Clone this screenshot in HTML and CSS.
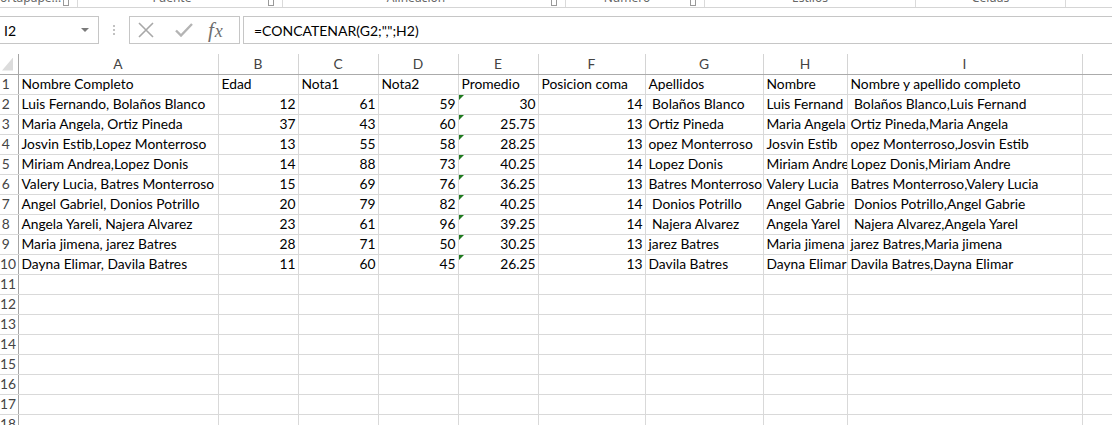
FILE: index.html
```html
<!DOCTYPE html>
<html lang="es">
<head>
    <meta charset="UTF-8">
    <title>Libro1 - Excel</title>
    <link rel="stylesheet" href="styles.css">
</head>
<body>

    <!-- bottom edge of the ribbon, group captions cut off -->
    <div class="ribbon">
        <div class="group g-clip"><span class="group-label">ortapape...</span><span class="launcher"></span></div>
        <div class="group g-font"><span class="group-label">Fuente</span><span class="launcher"></span></div>
        <div class="group g-align"><span class="group-label">Alineación</span><span class="launcher"></span></div>
        <div class="group g-num"><span class="group-label">Número</span><span class="launcher"></span></div>
        <div class="group g-styles"><span class="group-label">Estilos</span></div>
        <div class="group g-cells"><span class="group-label">Celdas</span></div>
    </div>

    <!-- formula bar -->
    <div class="formula-bar">
        <div class="name-box">
            <span>I2</span>
            <span class="drop"></span>
        </div>
        <div class="fb-grip"><span></span><span></span><span></span></div>
        <div class="fb-buttons">
            <svg class="ic-cancel" width="16" height="16" viewBox="0 0 16 16">
                <path d="M1 1 L15 15 M15 1 L1 15" stroke="#a8a8a8" stroke-width="1.6" fill="none"/>
            </svg>
            <svg class="ic-enter" width="18" height="14" viewBox="0 0 18 14">
                <path d="M1 7.5 L6 12.5 L17 1" stroke="#b4b4b4" stroke-width="2.4" fill="none"/>
            </svg>
            <span class="ic-fx"><i>f</i><i class="x">x</i></span>
        </div>
        <div class="fb-input">=CONCATENAR(G2;",";H2)</div>
    </div>

    <!-- worksheet -->
    <div class="sheet">
        <table class="grid">
            <colgroup>
                <col class="c-rh">
                <col class="c-a">
                <col class="c-b"><col class="c-b"><col class="c-b"><col class="c-b">
                <col class="c-f">
                <col class="c-g">
                <col class="c-h">
                <col class="c-i">
                <col class="c-j">
            </colgroup>
            <thead>
                <tr>
                    <th class="corner"><span class="corner-tri"></span></th>
                    <th>A</th><th>B</th><th>C</th><th>D</th><th>E</th>
                    <th>F</th><th>G</th><th>H</th><th>I</th><th></th>
                </tr>
            </thead>
            <tbody>
                <tr><td class="rn">1</td><td>Nombre Completo</td><td>Edad</td><td>Nota1</td><td>Nota2</td><td>Promedio</td><td>Posicion coma</td><td>Apellidos</td><td>Nombre</td><td>Nombre y apellido completo</td><td></td></tr>
                <tr><td class="rn">2</td><td>Luis Fernando, Bolaños Blanco</td><td class="num">12</td><td class="num">61</td><td class="num">59</td><td class="num flag">30</td><td class="num">14</td><td> Bolaños Blanco</td><td>Luis Fernand</td><td> Bolaños Blanco,Luis Fernand</td><td></td></tr>
                <tr><td class="rn">3</td><td>Maria Angela, Ortiz Pineda</td><td class="num">37</td><td class="num">43</td><td class="num">60</td><td class="num flag">25.75</td><td class="num">13</td><td>Ortiz Pineda</td><td>Maria Angela</td><td>Ortiz Pineda,Maria Angela</td><td></td></tr>
                <tr><td class="rn">4</td><td>Josvin Estib,Lopez Monterroso</td><td class="num">13</td><td class="num">55</td><td class="num">58</td><td class="num flag">28.25</td><td class="num">13</td><td>opez Monterroso</td><td>Josvin Estib</td><td>opez Monterroso,Josvin Estib</td><td></td></tr>
                <tr><td class="rn">5</td><td>Miriam Andrea,Lopez Donis</td><td class="num">14</td><td class="num">88</td><td class="num">73</td><td class="num flag">40.25</td><td class="num">14</td><td>Lopez Donis</td><td>Miriam Andre</td><td>Lopez Donis,Miriam Andre</td><td></td></tr>
                <tr><td class="rn">6</td><td>Valery Lucia, Batres Monterroso</td><td class="num">15</td><td class="num">69</td><td class="num">76</td><td class="num flag">36.25</td><td class="num">13</td><td>Batres Monterroso</td><td>Valery Lucia</td><td>Batres Monterroso,Valery Lucia</td><td></td></tr>
                <tr><td class="rn">7</td><td>Angel Gabriel, Donios Potrillo</td><td class="num">20</td><td class="num">79</td><td class="num">82</td><td class="num flag">40.25</td><td class="num">14</td><td> Donios Potrillo</td><td>Angel Gabrie</td><td> Donios Potrillo,Angel Gabrie</td><td></td></tr>
                <tr><td class="rn">8</td><td>Angela Yareli, Najera Alvarez</td><td class="num">23</td><td class="num">61</td><td class="num">96</td><td class="num flag">39.25</td><td class="num">14</td><td> Najera Alvarez</td><td>Angela Yarel</td><td> Najera Alvarez,Angela Yarel</td><td></td></tr>
                <tr><td class="rn">9</td><td>Maria jimena, jarez Batres</td><td class="num">28</td><td class="num">71</td><td class="num">50</td><td class="num flag">30.25</td><td class="num">13</td><td>jarez Batres</td><td>Maria jimena</td><td>jarez Batres,Maria jimena</td><td></td></tr>
                <tr><td class="rn">10</td><td>Dayna Elimar, Davila Batres</td><td class="num">11</td><td class="num">60</td><td class="num">45</td><td class="num flag">26.25</td><td class="num">13</td><td>Davila Batres</td><td>Dayna Elimar</td><td>Davila Batres,Dayna Elimar</td><td></td></tr>
                <tr><td class="rn">11</td><td></td><td></td><td></td><td></td><td></td><td></td><td></td><td></td><td></td><td></td></tr>
                <tr><td class="rn">12</td><td></td><td></td><td></td><td></td><td></td><td></td><td></td><td></td><td></td><td></td></tr>
                <tr><td class="rn">13</td><td></td><td></td><td></td><td></td><td></td><td></td><td></td><td></td><td></td><td></td></tr>
                <tr><td class="rn">14</td><td></td><td></td><td></td><td></td><td></td><td></td><td></td><td></td><td></td><td></td></tr>
                <tr><td class="rn">15</td><td></td><td></td><td></td><td></td><td></td><td></td><td></td><td></td><td></td><td></td></tr>
                <tr><td class="rn">16</td><td></td><td></td><td></td><td></td><td></td><td></td><td></td><td></td><td></td><td></td></tr>
                <tr><td class="rn">17</td><td></td><td></td><td></td><td></td><td></td><td></td><td></td><td></td><td></td><td></td></tr>
                <tr><td class="rn">18</td><td></td><td></td><td></td><td></td><td></td><td></td><td></td><td></td><td></td><td></td></tr>
            </tbody>
        </table>
    </div>

</body>
</html>
```

FILE: styles.css
```css
* {
    box-sizing: border-box;
}

body {
    margin: 0;
    font-family: Lato, "Liberation Sans", sans-serif;
    background: #fff;
    color: #000;
    overflow: hidden;
}

/* ribbon strip */
.ribbon {
    display: flex;
    height: 8px;
    border-bottom: 1px solid #d5d5d5;
    overflow: hidden;
    font-family: "Noto Sans", sans-serif;
    font-size: 12px;
    color: #666;
}

.group {
    display: flex;
    align-items: flex-start;
    height: 18px;
    margin-top: -10px;
    border-right: 1px solid #dadada;
}

.group-label {
    flex: 1;
    text-align: center;
    line-height: 16px;
    white-space: nowrap;
}

.launcher {
    width: 6px;
    height: 6px;
    margin: 10px 8px 0 2px;
    border-left: 1px solid #999;
    border-bottom: 1px solid #999;
    border-right: 1px solid #999;
}

.g-clip { width: 78px; }
.g-font { width: 205px; }
.g-align { width: 283px; }
.g-num { width: 139px; }
.g-styles { width: 211px; }
.g-cells { width: 150px; }

/* formula bar */
.formula-bar {
    display: flex;
    height: 28px;
    margin: 8px 0 10px;
    font-size: 14px;
}

.name-box {
    width: 99px;
    display: flex;
    align-items: center;
    justify-content: space-between;
    padding: 0 9px 0 4px;
    border: 1px solid #c6c6c6;
    border-left: none;
}

.drop {
    width: 0;
    height: 0;
    border-left: 4px solid transparent;
    border-right: 4px solid transparent;
    border-top: 4px solid #7a7a7a;
}

.fb-grip {
    width: 30px;
    display: flex;
    flex-direction: column;
    align-items: center;
    justify-content: center;
    gap: 2px;
}

.fb-grip span {
    width: 2px;
    height: 2px;
    background: #c2c2c2;
}

.fb-buttons {
    width: 111px;
    display: flex;
    align-items: center;
    padding-left: 8px;
    border: 1px solid #c6c6c6;
}

.ic-enter {
    margin-left: 21px;
}

.ic-fx {
    margin-left: 15px;
    font-family: "Liberation Serif", serif;
    font-size: 21px;
    color: #6f6f6f;
    line-height: 1;
}

.ic-fx .x {
    font-size: 18px;
    margin-left: 1px;
}

.fb-input {
    flex: 1;
    display: flex;
    align-items: center;
    margin-left: 3px;
    padding-left: 10px;
    border: 1px solid #c6c6c6;
    border-right: none;
}

/* worksheet */
.grid {
    border-collapse: collapse;
    table-layout: fixed;
    width: 1182px;
    font-size: 13.8px;
}

.c-rh { width: 18px; }
.c-a { width: 200px; }
.c-b { width: 80px; }
.c-f { width: 107px; }
.c-g { width: 118px; }
.c-h { width: 84px; }
.c-i { width: 235px; }
.c-j { width: 100px; }

.grid th {
    height: 20px;
    padding: 0;
    font-weight: normal;
    color: #444;
    border-right: 1px solid #d4d4d4;
    border-bottom: 1px solid #ababab;
    text-align: center;
}

.grid th.corner {
    border-right: 1px solid #a6a6a6;
    vertical-align: bottom;
    text-align: left;
}

.corner-tri {
    display: block;
    width: 11px;
    height: 13px;
    margin: 0 0 3px 2px;
    background: #dcdcdc;
    clip-path: polygon(100% 0, 100% 100%, 0 100%);
}

.grid td {
    height: 20px;
    padding: 0 2px 0 3px;
    border-right: 1px solid #d9d9d9;
    border-bottom: 1px solid #d9d9d9;
    white-space: pre;
    overflow: hidden;
    line-height: 18px;
}

.grid td.rn {
    padding: 0 6px 0 0;
    text-align: center;
    color: #444;
    border-right: 1px solid #a6a6a6;
    overflow: visible;
}

.grid td.num {
    text-align: right;
}

.grid td.flag {
    position: relative;
}

.grid td.flag::before {
    content: "";
    position: absolute;
    left: 0;
    top: 0;
    width: 6px;
    height: 6px;
    background: #1f7a1f;
    clip-path: polygon(0 0, 100% 0, 0 100%);
}
```
